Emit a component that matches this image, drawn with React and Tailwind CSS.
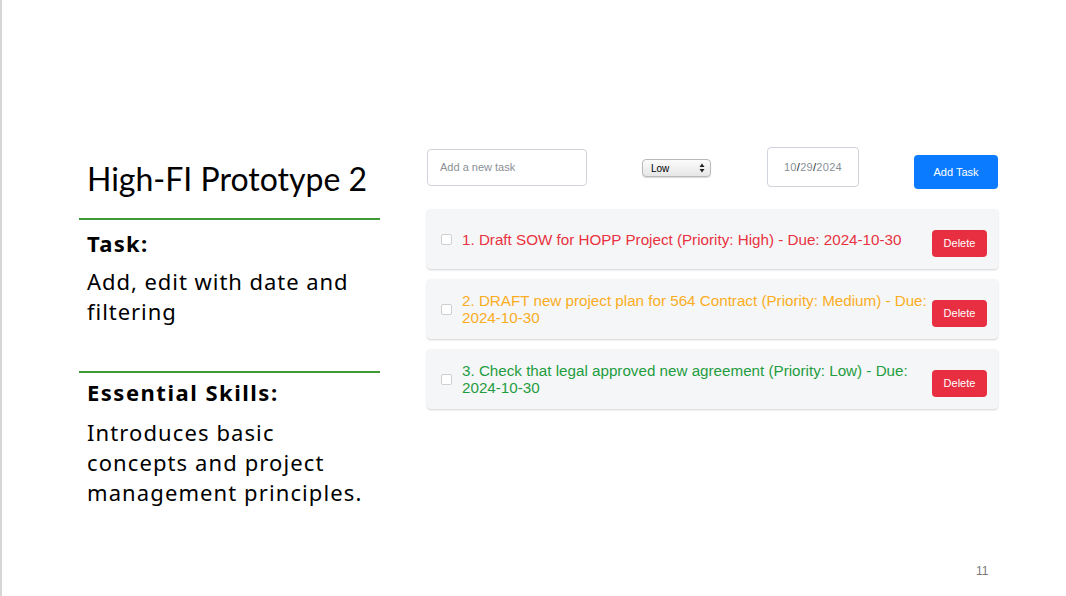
import React from "react";

const tasks = [
  { text: "1. Draft SOW for HOPP Project (Priority: High) - Due: 2024-10-30", color: "text-[#e8323f]" },
  { text: "2. DRAFT new project plan for 564 Contract (Priority: Medium) - Due: 2024-10-30", color: "text-[#fbad1e]" },
  { text: "3. Check that legal approved new agreement (Priority: Low) - Due: 2024-10-30", color: "text-[#1f9d3f]" },
];

export default function App() {
  return (
    <div className="w-[1066px] h-[596px] bg-white border-l-2 border-[#d6d6d6] relative flex items-start overflow-hidden">
      {/* Left column */}
      <div className="ml-[77px] w-[301px] pt-[156px] font-['Noto_Sans',sans-serif] text-black">
        <div className="pl-[8px] h-[62px] font-['Lato',sans-serif] text-[32px] leading-[46px] tracking-[0px] whitespace-nowrap">
          High-FI Prototype 2
        </div>
        <div className="h-[2px] bg-[#3d9a35]" />
        <div className="pl-[8px] pt-[8px] text-[22px] font-bold leading-[30px] tracking-[1.3px]">Task:</div>
        <div className="pl-[8px] pt-[8px] text-[22px] leading-[30px] tracking-[0.95px] h-[113px] pr-[4px]">
          Add, edit with date and filtering
        </div>
        <div className="h-[2px] bg-[#3d9a35]" />
        <div className="pl-[8px] pt-[4px] text-[22px] font-bold leading-[30px] tracking-[1.5px]">Essential Skills:</div>
        <div className="pl-[8px] pt-[10px] text-[22px] leading-[30px] tracking-[1.1px] pr-[2px]">
          Introduces basic concepts and project management principles.
        </div>
      </div>

      {/* Right column */}
      <div className="ml-[47px] w-[571px] pt-[147px] font-['Liberation_Sans',Arial,sans-serif]">
        <div className="flex items-start h-[62px]">
          <div className="mt-[2px] w-[160px] h-[37px] border border-[#cfd4da] rounded-[4px] flex items-center pl-[12px] text-[11px] text-[#8a8f96]">
            Add a new task
          </div>
          <div className="ml-[55px] mt-[12px] w-[69px] h-[18px] rounded-[4px] border border-[#b9b9b9] bg-gradient-to-b from-[#fbfbfb] to-[#e6e6e6] flex items-center justify-between pl-[8px] pr-[5px] text-[10px] text-black shadow-[0_1px_1px_rgba(0,0,0,0.15)]">
            <span>Low</span>
            <svg width="6" height="10" viewBox="0 0 6 10">
              <path d="M3 0.5 L5.5 4 H0.5 Z" fill="#222" />
              <path d="M3 9.5 L5.5 6 H0.5 Z" fill="#222" />
            </svg>
          </div>
          <div className="ml-[56px] w-[92px] h-[40px] border border-[#cfd4da] rounded-[4px] flex items-center justify-center text-[11px] text-[#8a8f96] tracking-[0.3px]">
            10<span className="text-[#222]">/</span>29<span className="text-[#222]">/</span>2024
          </div>
          <div className="ml-[55px] mt-[8px] w-[84px] h-[34px] rounded-[4px] bg-[#0a7bff] text-white text-[11px] flex items-center justify-center">
            Add Task
          </div>
        </div>

        <div className="flex flex-col gap-[10px]">
          {tasks.map((t, i) => (
            <div key={i} className="h-[60px] bg-[#f5f6f8] rounded-[4px] shadow-[0_1px_2px_rgba(0,0,0,0.18)] flex items-center pl-[14px] pr-[11px]">
              <div className="w-[11px] h-[11px] border border-[#cfcfcf] rounded-[2px] bg-white shrink-0" />
              <div className={`ml-[10px] flex-1 text-[15.2px] leading-[17px] ${t.color}`}>{t.text}</div>
              <div className="ml-[4px] mt-[9px] w-[55px] h-[27px] rounded-[4px] bg-[#e82f41] text-white text-[11px] flex items-center justify-center shrink-0">
                Delete
              </div>
            </div>
          ))}
        </div>
      </div>

      <div className="absolute left-[974px] top-[562px] text-[12px] text-[#7a7a7a] font-['Liberation_Sans',Arial,sans-serif]">11</div>
    </div>
  );
}
